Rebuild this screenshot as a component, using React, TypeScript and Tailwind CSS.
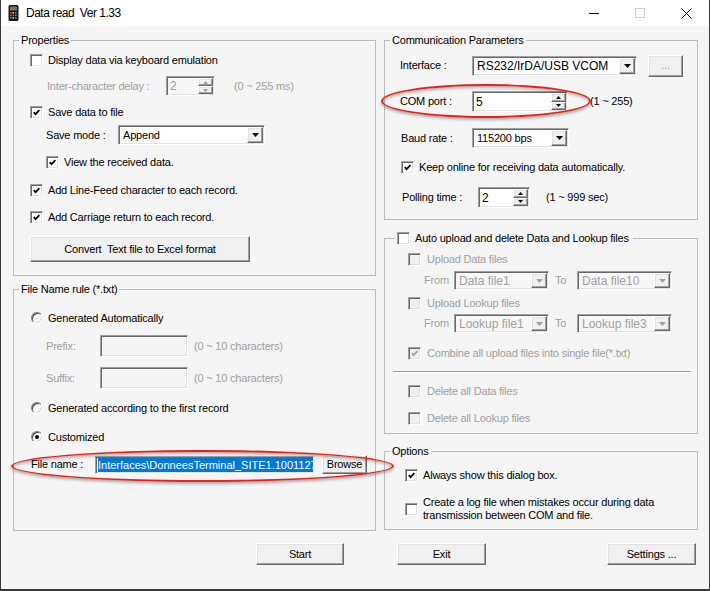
import React from 'react';

const SUNKEN =
  'border border-t-[#a0a0a0] border-l-[#a0a0a0] border-r-white border-b-white shadow-[inset_1px_1px_0_#696969,inset_-1px_-1px_0_#e3e3e3]';
const RAISED =
  'border border-t-white border-l-white border-r-[#696969] border-b-[#696969] shadow-[inset_-1px_-1px_0_#a0a0a0,inset_1px_1px_0_#e3e3e3] bg-[#f0f0f0]';
const DIM = 'text-[#a0a0a0]';

function Down({ color = '#000' }: { color?: string }) {
  return (
    <svg width="7" height="4" viewBox="0 0 7 4">
      <path d="M0 0H7L3.5 4Z" fill={color} />
    </svg>
  );
}

function SpinArrow({ up, color = '#000' }: { up?: boolean; color?: string }) {
  return (
    <svg width="5" height="3" viewBox="0 0 5 3">
      <path d={up ? 'M0 3H5L2.5 0Z' : 'M0 0H5L2.5 3Z'} fill={color} />
    </svg>
  );
}

function Check({ checked = false, disabled = false }: { checked?: boolean; disabled?: boolean }) {
  return (
    <span
      className={`flex h-[13px] w-[13px] shrink-0 items-center justify-center ${SUNKEN} ${
        disabled ? 'bg-[#f0f0f0]' : 'bg-white'
      }`}
    >
      {checked && (
        <svg width="7" height="7" viewBox="0 0 7 7">
          <path d="M0.7 3.2L2.6 5.2L6.4 1.2" fill="none" stroke={disabled ? '#a0a0a0' : '#000'} strokeWidth="1.7" />
        </svg>
      )}
    </span>
  );
}

function Radio({ checked = false }: { checked?: boolean }) {
  return (
    <span className="flex h-[12px] w-[12px] shrink-0 items-center justify-center rounded-full border border-t-[#808080] border-l-[#808080] border-r-white border-b-white bg-white shadow-[inset_1px_1px_0_#404040,inset_-1px_-1px_0_#d4d4d4]">
      {checked && <span className="h-[4px] w-[4px] rounded-full bg-black" />}
    </span>
  );
}

function Combo({ value, className, disabled }: { value: string; className: string; disabled?: boolean }) {
  return (
    <div className={`flex p-[1px] ${SUNKEN} ${disabled ? `bg-[#f7f7f7] ${DIM}` : 'bg-white'} ${className}`}>
      <span className="flex flex-1 items-center overflow-hidden whitespace-nowrap pl-[3px]">{value}</span>
      <span className={`flex w-[16px] items-center justify-center ${RAISED}`}>
        <Down color={disabled ? '#a0a0a0' : '#000'} />
      </span>
    </div>
  );
}

function Spin({ value, className, disabled }: { value: string; className: string; disabled?: boolean }) {
  const c = disabled ? '#a0a0a0' : '#000';
  return (
    <div className={`flex p-[1px] ${SUNKEN} ${disabled ? `bg-[#f7f7f7] ${DIM}` : 'bg-white'} ${className}`}>
      <span className="flex flex-1 items-center pl-[2px] text-[12px]">{value}</span>
      <div className="flex w-[15px] flex-col">
        <span className={`flex flex-1 items-center justify-center ${RAISED}`}>
          <SpinArrow up color={c} />
        </span>
        <span className={`flex flex-1 items-center justify-center ${RAISED}`}>
          <SpinArrow color={c} />
        </span>
      </div>
    </div>
  );
}

function Group({ legend, className = '', children }: { legend: React.ReactNode; className?: string; children: React.ReactNode }) {
  return (
    <fieldset className={`border border-[#bcbcbc] ${className}`}>
      <legend className="ml-[5px] px-[2px] leading-[14px]">{legend}</legend>
      <div className="flex flex-col">{children}</div>
    </fieldset>
  );
}

function TerminalIcon() {
  const keys = ['#e53935', '#fdd835', '#1e88e5', '#43a047', '#e53935', '#00acc1', '#1e88e5', '#fdd835', '#43a047'];
  return (
    <svg width="11" height="16" viewBox="0 0 11 16">
      <rect x="0.5" y="0" width="10" height="16" rx="1.5" fill="#161616" />
      <rect x="2" y="1.5" width="7" height="4" fill="#6b7373" />
      {keys.map((k, i) => (
        <rect key={i} x={2 + (i % 3) * 2.5} y={7 + Math.floor(i / 3) * 2.5} width="1.6" height="1.6" fill={k} />
      ))}
    </svg>
  );
}

export default function App() {
  return (
    <div className="relative h-[591px] w-[710px] overflow-hidden border-x border-b-2 border-[#3a3a3a] bg-[#f5f5f5] font-['Liberation_Sans',Arial,sans-serif] text-[11px] tracking-[-0.2px] text-black">
      {/* title bar */}
      <div className="flex h-[26px] items-center bg-white">
        <span className="ml-[7px] flex">
          <TerminalIcon />
        </span>
        <span className="ml-[7px] text-[12px] tracking-[-0.5px]">Data read&nbsp; Ver 1.33</span>
        <div className="ml-auto flex h-full">
          <span className="flex w-[46px] items-center justify-center">
            <span className="h-px w-[10px] bg-black" />
          </span>
          <span className="flex w-[46px] items-center justify-center">
            <span className="h-[10px] w-[10px] border border-[#cccccc]" />
          </span>
          <span className="flex w-[46px] items-center justify-center">
            <svg width="11" height="11" viewBox="0 0 11 11">
              <path d="M0.5 0.5L10.5 10.5M10.5 0.5L0.5 10.5" stroke="#000" strokeWidth="1" />
            </svg>
          </span>
        </div>
      </div>

      {/* body */}
      <div className="flex flex-col pl-[12px] pt-[7px]">
        <div className="flex items-start gap-[8px]">
          {/* left column */}
          <div className="flex w-[363px] flex-col">
            <Group legend="Properties">
              <div className="flex flex-col pb-[13px]">
                <div className="ml-[16px] mt-[5px] flex h-[16px] items-center gap-[5px]">
                  <Check />
                  Display data via keyboard emulation
                </div>
                <div className={`ml-[33px] mt-[8px] flex h-[20px] items-center ${DIM}`}>
                  <span className="w-[119px]">Inter-character delay :</span>
                  <Spin value="2" disabled className="h-[20px] w-[49px]" />
                  <span className="ml-[19px]">(0 ~ 255 ms)</span>
                </div>
                <div className="ml-[16px] mt-[8px] flex h-[16px] items-center gap-[5px]">
                  <Check checked />
                  Save data to file
                </div>
                <div className="ml-[32px] mt-[5px] flex h-[20px] items-center">
                  <span className="w-[72px]">Save mode :</span>
                  <Combo value="Append" className="h-[20px] w-[147px]" />
                </div>
                <div className="ml-[32px] mt-[9px] flex h-[16px] items-center gap-[5px]">
                  <Check checked />
                  View the received data.
                </div>
                <div className="ml-[16px] mt-[12px] flex h-[16px] items-center gap-[5px]">
                  <Check checked />
                  Add Line-Feed character to each record.
                </div>
                <div className="ml-[16px] mt-[11px] flex h-[16px] items-center gap-[5px]">
                  <Check checked />
                  Add Carriage return to each record.
                </div>
                <button className={`ml-[16px] mt-[11px] h-[26px] w-[220px] ${RAISED}`}>
                  Convert&nbsp; Text file to Excel format
                </button>
              </div>
            </Group>

            <Group legend="File Name rule (*.txt)" className="mt-[6px]">
              <div className="flex flex-col pb-[56px]">
                <div className="ml-[17px] mt-[14px] flex h-[16px] items-center gap-[5px]">
                  <Radio />
                  Generated Automatically
                </div>
                <div className={`ml-[32px] mt-[9px] flex h-[22px] items-center ${DIM}`}>
                  <span className="w-[54px]">Prefix:</span>
                  <span className={`h-[22px] w-[88px] ${SUNKEN} bg-[#f5f5f5]`} />
                  <span className="ml-[6px]">(0 ~ 10 characters)</span>
                </div>
                <div className={`ml-[32px] mt-[10px] flex h-[22px] items-center ${DIM}`}>
                  <span className="w-[54px]">Suffix:</span>
                  <span className={`h-[22px] w-[88px] ${SUNKEN} bg-[#f5f5f5]`} />
                  <span className="ml-[6px]">(0 ~ 10 characters)</span>
                </div>
                <div className="ml-[17px] mt-[11px] flex h-[16px] items-center gap-[5px]">
                  <Radio />
                  Generated according to the first record
                </div>
                <div className="ml-[17px] mt-[13px] flex h-[16px] items-center gap-[5px]">
                  <Radio checked />
                  Customized
                </div>
                <div className="ml-[17px] mt-[10px] flex h-[19px] items-center">
                  <span className="w-[64px]">File name :</span>
                  <div className={`flex h-[18px] w-[219px] items-center overflow-hidden p-[1px] pl-[2px] ${SUNKEN} bg-white`}>
                    <span className="whitespace-nowrap bg-[#0078d7] text-[11px] leading-[14px] tracking-normal text-white">
                      Interfaces\DonneesTerminal_SITE1.1001127
                    </span>
                  </div>
                  <button className={`ml-[8px] h-[19px] w-[45px] ${RAISED}`}>Browse</button>
                </div>
              </div>
            </Group>
          </div>

          {/* right column */}
          <div className="flex w-[314px] flex-col">
            <Group legend="Communication Parameters">
              <div className="flex flex-col pb-[11px]">
                <div className="ml-[15px] mt-[8px] flex h-[21px] items-center">
                  <span className="w-[72px]">Interface :</span>
                  <Combo value="RS232/IrDA/USB VCOM" className="h-[20px] w-[165px] text-[12px] tracking-normal" />
                  <button className={`ml-[11px] h-[22px] w-[35px] ${RAISED} ${DIM}`}>...</button>
                </div>
                <div className="ml-[15px] mt-[15px] flex h-[21px] items-center">
                  <span className="w-[72px]">COM port :</span>
                  <Spin value="5" className="h-[21px] w-[96px]" />
                  <span className="ml-[22px]">(1 ~ 255)</span>
                </div>
                <div className="ml-[16px] mt-[16px] flex h-[20px] items-center">
                  <span className="w-[71px]">Baud rate :</span>
                  <Combo value="115200 bps" className="h-[20px] w-[97px]" />
                </div>
                <div className="ml-[16px] mt-[11px] flex h-[16px] items-center gap-[5px]">
                  <Check checked />
                  Keep online for receiving data automatically.
                </div>
                <div className="ml-[17px] mt-[12px] flex h-[21px] items-center">
                  <span className="w-[76px]">Polling time :</span>
                  <Spin value="2" className="h-[21px] w-[52px]" />
                  <span className="ml-[16px]">(1 ~ 999 sec)</span>
                </div>
              </div>
            </Group>

            <fieldset className="mt-[11px] border border-[#bcbcbc]">
              <legend className="ml-[10px] flex h-[14px] items-center gap-[5px] pl-[2px] pr-[4px]">
                <Check />
                Auto upload and delete Data and Lookup files
              </legend>
              <div className={`flex flex-col pb-[7px] ${DIM}`}>
                <div className="ml-[23px] mt-[6px] flex h-[16px] items-center gap-[6px]">
                  <Check disabled />
                  Upload Data files
                </div>
                <div className="ml-[39px] mt-[4px] flex h-[19px] items-center">
                  <span className="w-[30px]">From</span>
                  <Combo value="Data file1" disabled className="h-[19px] w-[95px] text-[12px] tracking-normal" />
                  <span className="ml-[6px] w-[22px]">To</span>
                  <Combo value="Data file10" disabled className="h-[19px] w-[95px] text-[12px] tracking-normal" />
                </div>
                <div className="ml-[23px] mt-[5px] flex h-[16px] items-center gap-[6px]">
                  <Check disabled />
                  Upload Lookup files
                </div>
                <div className="ml-[39px] mt-[3px] flex h-[19px] items-center">
                  <span className="w-[30px]">From</span>
                  <Combo value="Lookup file1" disabled className="h-[19px] w-[95px] text-[12px] tracking-normal" />
                  <span className="ml-[6px] w-[22px]">To</span>
                  <Combo value="Lookup file3" disabled className="h-[19px] w-[95px] text-[12px] tracking-normal" />
                </div>
                <div className="ml-[23px] mt-[12px] flex h-[16px] items-center gap-[6px]">
                  <Check checked disabled />
                  Combine all upload files into single file(*.txt)
                </div>
                <div className="ml-[8px] mt-[10px] h-[2px] w-[298px] border-t border-b border-t-[#a0a0a0] border-b-white" />
                <div className="ml-[23px] mt-[10px] flex h-[16px] items-center gap-[6px]">
                  <Check disabled />
                  Delete all Data files
                </div>
                <div className="ml-[23px] mt-[11px] flex h-[16px] items-center gap-[6px]">
                  <Check disabled />
                  Delete all Lookup files
                </div>
              </div>
            </fieldset>

            <Group legend="Options" className="mt-[10px]">
              <div className="flex flex-col pb-[6px]">
                <div className="ml-[20px] mt-[9px] flex h-[16px] items-center gap-[5px]">
                  <Check checked />
                  Always show this dialog box.
                </div>
                <div className="ml-[20px] mt-[12px] flex h-[28px] items-center gap-[5px]">
                  <Check />
                  <span className="leading-[13px]">
                    Create a log file when mistakes occur during data
                    <br />
                    transmission between COM and file.
                  </span>
                </div>
              </div>
            </Group>
          </div>
        </div>

        {/* buttons */}
        <div className="mt-[12px] flex h-[22px]">
          <button className={`ml-[243px] h-[22px] w-[88px] ${RAISED}`}>Start</button>
          <button className={`ml-[53px] h-[22px] w-[89px] ${RAISED}`}>Exit</button>
          <button className={`ml-[121px] h-[22px] w-[89px] ${RAISED}`}>Settings ...</button>
        </div>
      </div>

      {/* red annotation ellipses */}
      <div className="pointer-events-none absolute left-[380px] top-[84px] h-[34px] w-[210px] rounded-[50%] border-2 border-[#e5231d] shadow-[0_2px_3px_rgba(0,0,0,0.3),inset_0_2px_3px_rgba(0,0,0,0.25)]" />
      <div className="pointer-events-none absolute left-[10px] top-[450px] h-[32px] w-[383px] rounded-[50%] border-2 border-[#e5231d] shadow-[0_2px_3px_rgba(0,0,0,0.3),inset_0_2px_3px_rgba(0,0,0,0.25)]" />
    </div>
  );
}
